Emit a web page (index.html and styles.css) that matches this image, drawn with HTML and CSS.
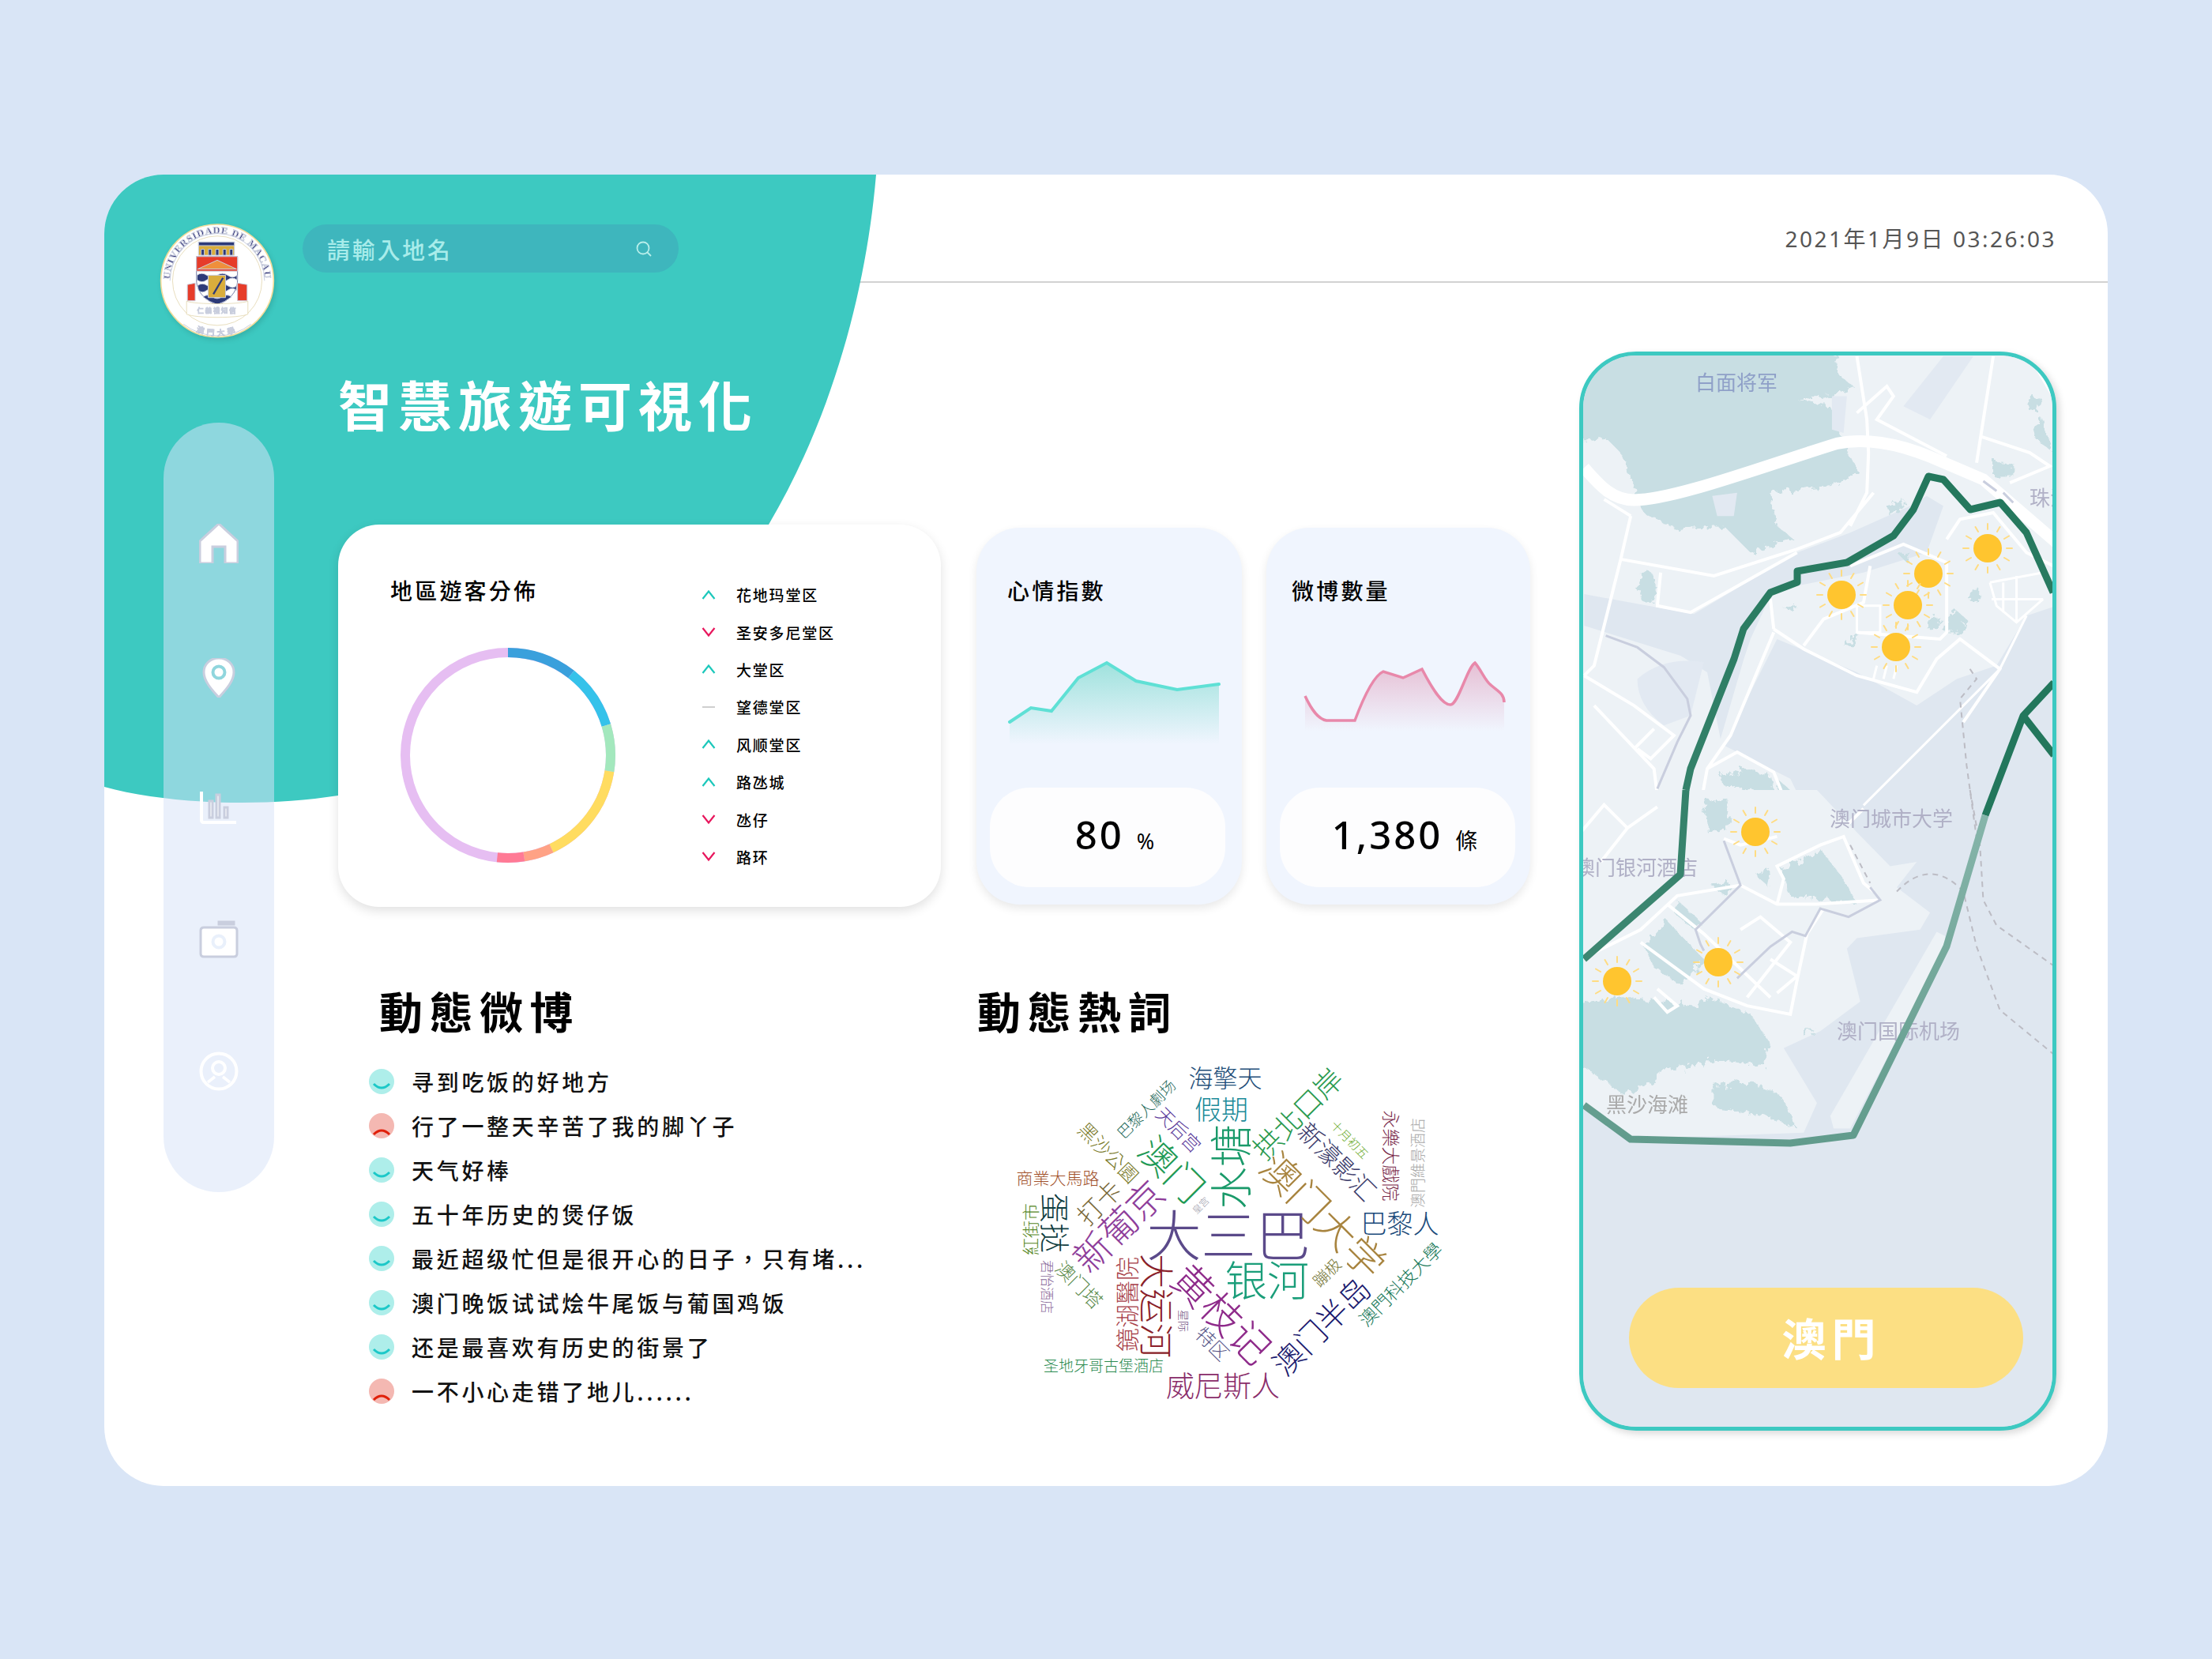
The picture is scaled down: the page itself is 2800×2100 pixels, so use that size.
FILE: index.html
```html
<!DOCTYPE html>
<html lang="zh-Hant">
<head>
    <meta charset="UTF-8">
    <meta name="viewport" content="width=device-width, initial-scale=1.0">
    <title>智慧旅遊可視化</title>
    <link rel="stylesheet" href="styles.css">
</head>
<body>
<svg class="defs" width="0" height="0">
    <filter id="rough" x="-20%" y="-20%" width="140%" height="140%">
        <feTurbulence type="fractalNoise" baseFrequency="0.05" numOctaves="3" seed="4"/>
        <feDisplacementMap in="SourceGraphic" scale="34"/>
    </filter>
    <symbol id="up" viewBox="0 0 18 14"><polyline points="1.5,12 9,2.5 16.5,12" fill="none" stroke="#1cc8bb" stroke-width="2.2"/></symbol>
    <symbol id="down" viewBox="0 0 18 14"><polyline points="1.5,2 9,11.5 16.5,2" fill="none" stroke="#e8175d" stroke-width="2.2"/></symbol>
    <symbol id="flat" viewBox="0 0 18 14"><line x1="1" y1="7" x2="17" y2="7" stroke="#cfcfcf" stroke-width="2"/></symbol>
    <symbol id="smile" viewBox="0 0 32 32"><circle cx="16" cy="16" r="16" fill="#aeeeea"/><path d="M6 19 Q16 29 26 19" fill="none" stroke="#1cc8c8" stroke-width="3"/></symbol>
    <symbol id="sad" viewBox="0 0 32 32"><circle cx="16" cy="16" r="16" fill="#f4b8b2"/><path d="M6 27 Q16 17 26 27" fill="none" stroke="#e0200a" stroke-width="3"/></symbol>
    <symbol id="sun" viewBox="-34 -34 68 68" overflow="visible">
        <path d="M0-24V-31M12-21L15.500-27M21-12L27-15.500M24 0H31M21 12L27 15.500M12 21L15.500 27M0 24V31M-12 21L-15.500 27M-21 12L-27 15.500M-24 0H-31M-21-12L-27-15.500M-12-21L-15.500-27" stroke="#ffdc82" stroke-width="2" stroke-linecap="round" fill="none"/>
        <circle r="18" fill="#ffc52f"/>
    </symbol>
</svg>

<div class="page">
<div class="panel">
    <div class="rule"></div>
    <svg class="teal" viewBox="0 0 1100 830" width="1100" height="830">
        <path d="M0 0H977C965 140 925 300 841 443L600 780L296 786C200 801 80 797 0 775Z" fill="#3dc9c1"/>
    </svg>

    <aside class="rail">
        <svg class="logo" viewBox="18 23 444 444" width="146" height="146">
            <circle cx="240" cy="243" r="217" fill="#fff" stroke="#f2dc9a" stroke-width="5"/>
            <circle cx="240" cy="243" r="172" fill="none" stroke="#dccd9c" stroke-width="2"/>
            <path id="seal-top" d="M58 243A182 182 0 0 1 422 243" fill="none"/>
            <path id="seal-bottom" d="M110 410A211 211 0 0 0 370 410" fill="none"/>
            <text class="seal-name"><textPath href="#seal-top" startOffset="50%">UNIVERSIDADE DE MACAU</textPath></text>
            <text class="seal-cn"><textPath href="#seal-bottom" startOffset="50%">澳門大學</textPath></text>
            <path d="M168 94H306V145H168Z" fill="#d9ad3c"/>
            <path d="M168 94H306V108H168ZM178 122H190V145H178ZM206 122H218V145H206ZM234 122H246V145H234ZM262 122H274V145H262ZM288 122H300V145H288Z" fill="#2d3a78"/>
            <path d="M160 150H318V240C318 290 280 322 240 336C200 322 160 290 160 240Z" fill="#fff" stroke="#2d3a78" stroke-width="2"/>
            <path d="M160 150H318V206H160Z" fill="#e63c2a"/>
            <path d="M165 198L240 164L314 198Z" fill="#ef8f3c"/>
            <path d="M162 222Q180 208 200 222T240 222T280 222T316 222V240Q298 226 280 240T240 240T200 240T162 240ZM164 262Q182 248 202 262T240 262T280 262T314 262V280Q298 266 280 280T240 280T200 280T168 280ZM185 305Q205 292 222 305T258 305T295 305Q270 325 240 335Q210 325 185 305Z" fill="#2d3a78"/>
            <path d="M205 222H272V308H205Z" fill="#d9ad3c"/>
            <path d="M225 295L262 232" stroke="#2d3a78" stroke-width="7"/>
            <path d="M125 258L155 252V320H125Z" fill="#e63c2a"/>
            <path d="M318 252L355 258V320H318Z" fill="#e63c2a"/>
            <path d="M122 322C160 335 320 335 358 322V372C320 388 160 388 122 372Z" fill="#fff" stroke="#dccd9c" stroke-width="2"/>
            <text class="seal-motto" x="240" y="366">仁義禮知信</text>
        </svg>
        <nav class="pill">
            <svg class="nav-icon" viewBox="0 0 50 50">
                <path d="M25 0L49 22V48Q49 50 47 50H33V29H17V50H3Q1 50 1 48V22Z" fill="#fff"/>
            </svg>
            <svg class="nav-icon nav-pin" viewBox="0 0 50 50">
                <path d="M25 0C14 0 6 8 6 18C6 30 18 42 25 50C32 42 44 30 44 18C44 8 36 0 25 0Z" fill="#fff"/>
                <circle cx="25" cy="18" r="7.500" fill="#fff" stroke="#90d6dd" stroke-width="4"/>
            </svg>
            <svg class="nav-icon" viewBox="0 0 50 50">
                <path d="M3 5V41Q3 44 6 44H47" fill="none" stroke="#fff" stroke-width="4"/>
                <path d="M13 17H17V38H13ZM22 9H26V38H22ZM32 25H36V38H32Z" fill="#fff"/>
            </svg>
            <svg class="nav-icon" viewBox="0 0 50 50">
                <path d="M25 3H44V6H25ZM6 10H44Q48 10 48 14V43Q48 47 44 47H6Q2 47 2 43V14Q2 10 6 10Z" fill="#fff"/>
                <circle cx="25" cy="28" r="7.500" fill="#fff" stroke="#e9f0fb" stroke-width="4"/>
            </svg>
            <svg class="nav-icon" viewBox="0 0 50 50">
                <circle cx="25" cy="25" r="22.500" fill="none" stroke="#fff" stroke-width="4"/>
                <circle cx="25" cy="21" r="8" fill="none" stroke="#fff" stroke-width="4"/>
                <path d="M11 39L20 32M39 39L30 32" stroke="#fff" stroke-width="3.500"/>
            </svg>
        </nav>
    </aside>

    <main class="main">
        <div class="search">
            <span class="search-text">請輸入地名</span>
            <svg class="search-icon" viewBox="0 0 24 24" width="24" height="24">
                <circle cx="11" cy="11" r="7.500" fill="none" stroke="#b8eeea" stroke-width="1.800"/>
                <path d="M16.500 16.500L21 21" stroke="#b8eeea" stroke-width="1.800"/>
            </svg>
        </div>
        <h1 class="title">智慧旅遊可視化</h1>

        <section class="cards">
            <div class="region-card">
                <div class="region-left">
                    <h3 class="card-title">地區遊客分佈</h3>
                    <svg class="donut" viewBox="0 0 280 280" width="280" height="280">
                        <g transform="rotate(-90 140 140)" fill="none" stroke-width="12">
                            <circle cx="140" cy="140" r="130" pathLength="360" stroke="#e6bef2"/>
                            <circle cx="140" cy="140" r="130" pathLength="360" stroke="#3aa0dc" stroke-dasharray="38 360"/>
                            <circle cx="140" cy="140" r="130" pathLength="360" stroke="#35c2ea" stroke-dasharray="35 360" stroke-dashoffset="-38"/>
                            <circle cx="140" cy="140" r="130" pathLength="360" stroke="#a3e8bd" stroke-dasharray="26 360" stroke-dashoffset="-73"/>
                            <circle cx="140" cy="140" r="130" pathLength="360" stroke="#ffdc60" stroke-dasharray="56 360" stroke-dashoffset="-99"/>
                            <circle cx="140" cy="140" r="130" pathLength="360" stroke="#ffa285" stroke-dasharray="16 360" stroke-dashoffset="-155"/>
                            <circle cx="140" cy="140" r="130" pathLength="360" stroke="#ff7a95" stroke-dasharray="15 360" stroke-dashoffset="-171"/>
                        </g>
                    </svg>
                </div>
                <ul class="legend">
                    <li><svg class="arrow"><use href="#up"/></svg>花地玛堂区</li>
                    <li><svg class="arrow"><use href="#down"/></svg>圣安多尼堂区</li>
                    <li><svg class="arrow"><use href="#up"/></svg>大堂区</li>
                    <li><svg class="arrow"><use href="#flat"/></svg>望德堂区</li>
                    <li><svg class="arrow"><use href="#up"/></svg>风顺堂区</li>
                    <li><svg class="arrow"><use href="#up"/></svg>路氹城</li>
                    <li><svg class="arrow"><use href="#down"/></svg>氹仔</li>
                    <li><svg class="arrow"><use href="#down"/></svg>路环</li>
                </ul>
            </div>

            <div class="mini-card">
                <h3 class="card-title mini-title">心情指數</h3>
                <svg class="spark" viewBox="1236 765 336 195" width="336" height="195">
                    <defs>
                        <linearGradient id="fill-teal" gradientUnits="userSpaceOnUse" x1="0" y1="839" x2="0" y2="942">
                            <stop offset="0" stop-color="#9fe2dd"/>
                            <stop offset="1" stop-color="#f0f5fe"/>
                        </linearGradient>
                        <linearGradient id="fill-pink" gradientUnits="userSpaceOnUse" x1="0" y1="839" x2="0" y2="925">
                            <stop offset="0" stop-color="#e6bfd4"/>
                            <stop offset="1" stop-color="#f0f5fe"/>
                        </linearGradient>
                    </defs>
                    <path d="M1278 914L1305 896L1331 900L1365 858L1401 839L1438 862L1490 873L1543 866V942H1278Z" fill="url(#fill-teal)"/>
                    <polyline points="1278,914 1305,896 1331,900 1365,858 1401,839 1438,862 1490,873 1543,866" fill="none" stroke="#5fe0d5" stroke-width="4" stroke-linecap="round"/>
                </svg>
                <div class="value"><b>80</b><span>%</span></div>
            </div>

            <div class="mini-card mini-card-b">
                <h3 class="card-title mini-title-b">微博數量</h3>
                <svg class="spark" viewBox="1603 765 334 195" width="334" height="195">
                    <path d="M1652 881C1660 898 1668 910 1679 912L1715 912C1727 880 1740 855 1751 850L1776 858L1800 847C1812 870 1825 892 1836 892C1846 892 1857 845 1867 839C1875 848 1880 862 1887 867C1896 875 1904 878 1904 889V925H1652Z" fill="url(#fill-pink)"/>
                    <path d="M1652 881C1660 898 1668 910 1679 912L1715 912C1727 880 1740 855 1751 850L1776 858L1800 847C1812 870 1825 892 1836 892C1846 892 1857 845 1867 839C1875 848 1880 862 1887 867C1896 875 1904 878 1904 889" fill="none" stroke="#e888aa" stroke-width="3.500"/>
                </svg>
                <div class="value"><b>1,380</b><span class="unit-cn">條</span></div>
            </div>
        </section>

        <section class="bottom">
            <div class="feed">
                <h2 class="heading heading-feed">動態微博</h2>
                <ul class="feed-list">
                    <li><svg class="mood"><use href="#smile"/></svg>寻到吃饭的好地方</li>
                    <li><svg class="mood"><use href="#sad"/></svg>行了一整天辛苦了我的脚丫子</li>
                    <li><svg class="mood"><use href="#smile"/></svg>天气好棒</li>
                    <li><svg class="mood"><use href="#smile"/></svg>五十年历史的煲仔饭</li>
                    <li><svg class="mood"><use href="#smile"/></svg>最近超级忙但是很开心的日子，只有堵...</li>
                    <li><svg class="mood"><use href="#smile"/></svg>澳门晚饭试试烩牛尾饭与葡国鸡饭</li>
                    <li><svg class="mood"><use href="#smile"/></svg>还是最喜欢有历史的街景了</li>
                    <li><svg class="mood"><use href="#sad"/></svg>一不小心走错了地儿......</li>
                </ul>
            </div>
            <div class="hot">
                <h2 class="heading">動態熱詞</h2>
                <svg class="cloud" viewBox="1237 1330 640 470" width="640" height="470">
                    <text x="1555" y="1565" font-size="69" fill="#5b4a8a">大三巴</text>
                    <text x="1551" y="1367" font-size="31" fill="#1f4e79">海擎天</text>
                    <text x="1546" y="1407" font-size="34" fill="#1c8a99">假期</text>
                    <text x="1555" y="1482" font-size="54" fill="#1a9a6a" transform="rotate(-90 1555 1482)">水塘</text>
                    <text x="1485" y="1483" font-size="47" fill="#1f9a55" transform="rotate(45 1485 1483)">澳门</text>
                    <text x="1677" y="1541" font-size="50" fill="#a8843f" transform="rotate(45 1677 1541)">澳门大学</text>
                    <text x="1641" y="1413" font-size="36" fill="#2a9a4f" transform="rotate(-45 1641 1413)">拱北口岸</text>
                    <text x="1414" y="1555" font-size="47" fill="#8e3d9a" transform="rotate(-45 1414 1555)">新葡京</text>
                    <text x="1549" y="1666" font-size="51" fill="#8e2a8a" transform="rotate(45 1549 1666)">黄枝记</text>
                    <text x="1604" y="1623" font-size="53" fill="#1b9e7a">银河</text>
                    <text x="1466" y="1658" font-size="44" fill="#8a1f2a" transform="rotate(90 1466 1658)">大运河</text>
                    <text x="1671" y="1682" font-size="39" fill="#1a1a6e" transform="rotate(-45 1671 1682)">澳门半岛</text>
                    <text x="1548" y="1757" font-size="36" fill="#8a2d6a">威尼斯人</text>
                    <text x="1397" y="1732" font-size="19" fill="#2a8a4f">圣地牙哥古堡酒店</text>
                    <text x="1772" y="1630" font-size="23" fill="#1a7a5a" transform="rotate(-45 1772 1630)">澳門科技大學</text>
                    <text x="1772" y="1552" font-size="33" fill="#1a4a7a">巴黎人</text>
                    <text x="1337" y="1553" font-size="38" fill="#0f3d3f" transform="rotate(90 1337 1553)">蛋挞</text>
                    <text x="1390" y="1526" font-size="32" fill="#7a6a3a" transform="rotate(-45 1390 1526)">打卡</text>
                    <text x="1339" y="1495" font-size="21" fill="#a0502a">商業大馬路</text>
                    <text x="1303" y="1561" font-size="22" fill="#5a8a2a" transform="rotate(-90 1303 1561)">紅街市</text>
                    <text x="1326" y="1634" font-size="17" fill="#8a6a9a" transform="rotate(90 1326 1634)">君怡酒店</text>
                    <text x="1367" y="1630" font-size="24" fill="#5a8a4a" transform="rotate(45 1367 1630)">澳门塔</text>
                    <text x="1425" y="1656" font-size="30" fill="#a83f4a" transform="rotate(-90 1425 1656)">鏡湖醫院</text>
                    <text x="1519" y="1530" font-size="12" fill="#9a9aa8" transform="rotate(-45 1519 1530)">皇宫</text>
                    <text x="1499" y="1677" font-size="14" fill="#6a4a7a" transform="rotate(90 1499 1677)">星际</text>
                    <text x="1536" y="1705" font-size="24" fill="#5a5a8a" transform="rotate(45 1536 1705)">特区</text>
                    <text x="1679" y="1615" font-size="20" fill="#7a7a3a" transform="rotate(-45 1679 1615)">蹦极</text>
                    <text x="1694" y="1474" font-size="31" fill="#3a3a6a" transform="rotate(45 1694 1474)">新濠影汇</text>
                    <text x="1709" y="1447" font-size="15" fill="#6aaa2a" transform="rotate(45 1709 1447)">十月初五</text>
                    <text x="1762" y="1468" font-size="23" fill="#7a2a4a" transform="rotate(90 1762 1468)">永樂大戲院</text>
                    <text x="1793" y="1477" font-size="19" fill="#a9a9a9" transform="rotate(-90 1793 1477)">澳門維景酒店</text>
                    <text x="1450" y="1408" font-size="19" fill="#1f6a5a" transform="rotate(-45 1450 1408)">巴黎人劇场</text>
                    <text x="1493" y="1434" font-size="23" fill="#5a3a9a" transform="rotate(45 1493 1434)">天后宫</text>
                    <text x="1404" y="1463" font-size="24" fill="#7a7a2a" transform="rotate(45 1404 1463)">黑沙公園</text>
                </svg>
            </div>
        </section>
    </main>

    <aside class="side">
        <div class="clock">2021年1月9日 03:26:03</div>
        <div class="map-card">
            <svg class="map" viewBox="2004 450 594 1356" width="594" height="1356">
                <defs>
                    <linearGradient id="route-dark" gradientUnits="userSpaceOnUse" x1="0" y1="600" x2="0" y2="1250">
                        <stop offset="0" stop-color="#23775c"/>
                        <stop offset="1" stop-color="#3f8873"/>
                    </linearGradient>
                    <linearGradient id="route-light" gradientUnits="userSpaceOnUse" x1="0" y1="1032" x2="0" y2="1450">
                        <stop offset="0" stop-color="#86b5aa"/>
                        <stop offset="1" stop-color="#619b8c"/>
                    </linearGradient>
                </defs>
                <rect class="water" x="2004" y="450" width="594" height="1356"/>

                <!-- upper part, north of the bridge down to the university -->
                <g transform="translate(1980 430) scale(.421)">
                    <path class="land" d="M50 40H1480V800L1390 830L1300 980L1180 1020L1060 1100L880 1000L640 900L480 1220L680 1320L800 1568H50Z"/>
                    <path class="water" d="M60 765L390 825L700 640L860 580L1040 500L1090 470L1140 500L1090 640L900 700L700 740L620 770L560 900L540 960L470 1200L430 1000L350 950L60 860Z"/>
                    <path class="water-soft" d="M1020 200L1140 50H1230L1100 240Z"/>
                    <path class="water-soft" d="M220 1020Q300 950 420 970L380 1130L300 1160Q220 1100 220 1020Z"/>
                    <path class="veg" d="M30 30H810L830 110L870 140L800 170L700 180L800 200L850 330L885 400L800 440L620 460L640 560L690 600L560 640L480 560L340 570L240 520L170 340L130 300L30 300Z"/>
                    <path class="water-soft" d="M805 170L850 170L840 280L805 270ZM445 470L520 460L510 530L460 530Z"/>
                    <ellipse class="veg" cx="250" cy="745" rx="25" ry="50"/>
                    <path class="veg" d="M970 500L1020 480L1020 510L980 530ZM1290 365L1350 370L1350 410L1290 410ZM1395 180L1430 170L1420 215L1395 210ZM1410 260L1440 240L1470 340L1420 300ZM1225 750L1250 750L1250 790L1220 785ZM1140 845L1180 815L1210 840L1200 880H1145ZM1090 845L1130 835L1125 870L1090 870ZM1010 650L1040 640L1030 670ZM660 810L700 800L690 815ZM840 920L880 880L870 925Z"/>
                    <path class="veg" d="M465 1310L540 1290L620 1310L630 1370L560 1350L480 1340ZM640 1320L710 1380L690 1400L640 1350ZM420 1370L530 1460L470 1460L415 1410Z"/>

                    <path class="road road-main" d="M60 385C100 430 140 482 210 482C330 482 600 380 820 312C900 295 1000 310 1100 352L1260 420L1480 610"/>
                    <path class="road" d="M170 660L450 710L700 630L830 580L930 460M200 530L170 660L90 980L60 1010M120 480L200 530M880 50L910 240L915 340L910 460L860 560M880 220L970 140L990 170L940 240L1150 350M1290 50L1240 370M1250 290L1400 340L1460 380L1340 430M1400 50L1470 170M290 700L280 800L380 820L700 640"/>
                    <path class="road" d="M60 1010L210 1100L330 1190L260 1260L220 1230M90 1100L270 1290L280 1370L200 1470M60 1470L120 1400L200 1470L280 1540M270 1170L210 1230"/>
                    <path class="road" d="M630 870L720 930L880 1010L1060 1060L1120 960L1190 900L1310 990L1200 1150M630 870L620 780M720 920L780 840L900 790L920 680M630 880L500 1190L430 1290L410 1400M860 680L1020 615L1150 670L1150 880L1130 900L880 880M1150 600L1190 540L1290 520L1390 640L1470 680"/>
                    <path class="road road-thin" d="M1280 730L1440 700M1280 730L1300 800L1360 850L1440 780M1320 730V820M1360 710V850M1285 780H1440M1390 830L1310 990L900 1400M940 980L930 1020M970 980L960 1020M1000 980L990 1020M880 800H950V880H880Z"/>
                    <path class="road" d="M430 1290L520 1240L630 1300L670 1400L670 1500M900 1410L830 1480L860 1560"/>
                    <path class="rail" d="M125 890L220 925L300 985L370 1080L380 1130L340 1210L280 1350M1260 425L1300 455M1320 460L1350 490"/>
                    <path class="ferry" d="M1220 990L1240 1020L1190 1080L1210 1280L1240 1500"/>
                </g>

                <!-- lower part, Taipa, Cotai and Coloane -->
                <g transform="translate(1980 1000) scale(.421 .5356)">
                    <path class="land" d="M50 0L760 0L880 100L980 180L1060 170L1000 230L1100 290L1070 330L880 350L850 375L890 500L770 570L660 610L760 740L720 810L210 825L50 740Z"/>
                    <path class="land" d="M1120 335L1145 345V370L860 800H810L800 770Z"/>
                    <path class="veg" d="M420 30L490 20L500 90L430 100ZM650 190L770 140L840 210L880 270L780 260L680 250ZM240 370L310 310L420 400L350 460L270 420ZM340 260L410 310L390 330L330 290ZM440 225L500 220L490 250ZM575 200L620 190L610 225ZM720 570L760 565L720 580Z"/>
                    <path class="veg" d="M30 510L150 490L300 500L400 510L440 490L560 530L620 600L600 650L480 640L300 660L240 700L180 720L30 640Z"/>
                    <path class="veg" d="M450 700L560 690L650 720L700 800L600 770L450 750Z"/>
                    <path class="road" d="M50 400L230 330L340 250L530 225L640 270L760 270L950 260M230 360L420 470L550 510L680 530L700 450L730 340L780 280M310 270L420 340L620 490M530 330L590 300L680 360L550 490M620 400L700 440L640 480M50 100L120 35L190 90L110 170M190 90L280 40M640 270L660 210L640 180L770 130L840 110L900 220L930 240M280 470L340 510L310 525L270 490M480 115L530 130L640 110"/>
                    <path class="rail" d="M480 120L530 225L395 330L410 365L420 380M520 445L620 370L685 335L725 345L770 280L855 300L950 260L920 230"/>
                    <path class="ferry" d="M1220 0L1250 130L1260 260L1300 320L1480 420M1000 240C1060 190 1130 180 1200 240L1240 370L1310 520L1480 630M860 130L920 220"/>
                </g>

                <text class="map-label label-blue" x="2146" y="494">白面将军</text>
                <text class="map-label" x="2569" y="640">珠海</text>
                <text class="map-label" x="2316" y="1046">澳门城市大学</text>
                <text class="map-label" x="1993" y="1108">澳门银河酒店</text>
                <text class="map-label" x="2325" y="1315">澳门国际机场</text>
                <text class="map-label label-grey" x="2033" y="1408">黑沙海滩</text>

                <path class="route route-dark" d="M2134 1000L2140 973L2195 834L2207 796L2241 750L2275 737L2275 723L2338 712L2397 678L2422 645L2441 603L2460 607L2494 645L2532 636L2565 674L2599 750"/>
                <path class="route route-dark" d="M2134 1000L2127 1107L2005 1214"/>
                <path class="route route-solid" d="M2513 1032L2561 906L2600 864M2561 906L2600 956"/>
                <path class="route route-light" d="M2513 1032L2464 1198L2346 1437L2266 1447L2064 1442L2005 1399"/>

                <use href="#sun" x="2297" y="719" width="68" height="68"/>
                <use href="#sun" x="2407" y="692" width="68" height="68"/>
                <use href="#sun" x="2381" y="732" width="68" height="68"/>
                <use href="#sun" x="2366" y="785" width="68" height="68"/>
                <use href="#sun" x="2482" y="660" width="68" height="68"/>
                <use href="#sun" x="2188" y="1019" width="68" height="68"/>
                <use href="#sun" x="2141" y="1184" width="68" height="68"/>
                <use href="#sun" x="2013" y="1208" width="68" height="68"/>
            </svg>
            <button class="city-btn">澳門</button>
        </div>
    </aside>
</div>
</div>
</body>
</html>
```

FILE: styles.css
```css
* {
    box-sizing: border-box;
}

body {
    margin: 0;
    background-color: #d9e5f6;
    font-family: "Noto Sans CJK TC", "Noto Sans", sans-serif;
    color: #111;
}

.defs {
    position: absolute;
}

h1, h2, h3, ul {
    margin: 0;
    padding: 0;
    list-style: none;
}

.page {
    padding: 221px 132px 0 132px;
    height: 2100px;
}

.panel {
    position: relative;
    display: flex;
    height: 1660px;
    background-color: #fff;
    border-radius: 75px;
    overflow: hidden;
}

.rule {
    position: absolute;
    top: 135px;
    left: 900px;
    right: 0;
    height: 2px;
    background-color: #d2d2d2;
}

.teal {
    position: absolute;
    top: 0;
    left: 0;
}

/* left rail */
.rail {
    position: relative;
    width: 251px;
    flex: none;
    padding: 62px 0 0 70px;
}

.logo {
    display: block;
    filter: drop-shadow(2px 3px 3px rgba(0, 0, 0, 0.12));
}

.seal-name {
    font-family: "Liberation Serif", serif;
    font-weight: bold;
    font-size: 37px;
    letter-spacing: 3px;
    fill: #1f1f6a;
    text-anchor: middle;
}

.seal-cn {
    font-size: 30px;
    letter-spacing: 12px;
    fill: #2a2a70;
    text-anchor: middle;
}

.seal-motto {
    font-size: 25px;
    letter-spacing: 6px;
    fill: #444;
    text-anchor: middle;
}

.pill {
    display: flex;
    flex-direction: column;
    align-items: center;
    gap: 117px;
    width: 140px;
    height: 974px;
    margin: 106px 0 0 5px;
    padding-top: 128px;
    border-radius: 70px;
    background-color: rgba(215, 226, 247, 0.53);
}

.nav-icon {
    width: 50px;
    height: 50px;
    flex: none;
}

.nav-pin {
    transform: translateY(3px);
}

/* middle column */
.main {
    position: relative;
    width: 1616px;
    flex: none;
}

.search {
    display: flex;
    align-items: center;
    justify-content: space-between;
    width: 476px;
    height: 61px;
    margin-top: 63px;
    padding: 0 32px 0 31px;
    border-radius: 31px;
    background-color: #3eb6bd;
}

.search-text {
    font-size: 29px;
    font-weight: 500;
    letter-spacing: 2.700px;
    color: #a8ecea;
}

.title {
    margin: 126px 0 0 45px;
    font-size: 68px;
    line-height: 80px;
    font-weight: 700;
    letter-spacing: 8px;
    color: #fff;
}

.cards {
    display: flex;
    align-items: flex-start;
    margin: 113px 0 0 45px;
}

.region-card {
    display: flex;
    width: 763px;
    height: 484px;
    margin-right: 45px;
    padding: 65px 0 0 66px;
    border-radius: 52px;
    background-color: #fff;
    box-shadow: 0 5px 14px rgba(0, 0, 0, 0.12);
}

.region-left {
    width: 394px;
}

.card-title {
    font-size: 28px;
    line-height: 36px;
    font-weight: 500;
    letter-spacing: 3.200px;
    color: #000;
}

.donut {
    display: block;
    margin: 51px 0 0 9px;
}

.legend li {
    display: flex;
    align-items: center;
    height: 47.400px;
    font-size: 19px;
    font-weight: 500;
    letter-spacing: 1.800px;
    color: #000;
}

.arrow {
    width: 18px;
    height: 14px;
    margin-right: 26px;
}

.mini-card {
    width: 336px;
    height: 477px;
    margin-top: 4px;
    margin-right: 31px;
    padding-top: 61px;
    border-radius: 55px;
    background-color: #f0f5fe;
    box-shadow: 0 5px 12px rgba(0, 0, 0, 0.09);
}

.mini-card-b {
    width: 334px;
    margin-right: 0;
}

.mini-title {
    padding-left: 39px;
}

.mini-title-b {
    padding-left: 32px;
}

.spark {
    display: block;
}

.value {
    display: flex;
    align-items: baseline;
    justify-content: center;
    gap: 16px;
    width: 298px;
    height: 126px;
    margin: 37px 0 0 17px;
    padding: 26px 0 0 18px;
    border-radius: 50px;
    background-color: #fdfdfe;
    font-family: "Noto Sans", sans-serif;
    color: #000;
}

.value b {
    font-size: 49px;
    font-weight: 500;
    letter-spacing: 3px;
}

.value span {
    font-size: 27px;
}

.value .unit-cn {
    font-family: "Noto Sans CJK TC", sans-serif;
    font-size: 28px;
}

.bottom {
    display: flex;
    margin-top: 95px;
}

.heading {
    font-size: 55px;
    line-height: 70px;
    font-weight: 700;
    letter-spacing: 8.500px;
    color: #000;
}

.feed {
    width: 770px;
    margin-left: 84px;
}

.heading-feed {
    margin-left: 13px;
}

.feed-list {
    margin-top: 28px;
    font-family: "Noto Sans CJK SC", sans-serif;
    font-weight: 500;
}

.feed-list li {
    display: flex;
    align-items: center;
    height: 56px;
    font-size: 28px;
    letter-spacing: 3.700px;
    white-space: nowrap;
}

.mood {
    width: 32px;
    height: 32px;
    margin-right: 22px;
    flex: none;
}

.cloud {
    display: block;
    margin-top: 12px;
    font-family: "Noto Sans CJK SC", sans-serif;
    font-weight: 300;
}

.cloud text {
    text-anchor: middle;
    dominant-baseline: central;
}

/* map column */
.side {
    position: relative;
    flex: 1;
    padding-right: 67px;
}

.clock {
    margin-top: 63px;
    font-family: "Noto Sans", "Noto Sans CJK SC", sans-serif;
    font-size: 28px;
    line-height: 36px;
    letter-spacing: 2.500px;
    text-align: right;
    color: #555;
}

.map-card {
    position: relative;
    width: 604px;
    height: 1366px;
    margin-top: 125px;
    border: 5px solid #3dc9c1;
    border-radius: 72px;
    overflow: hidden;
    background-color: #dfe7f0;
    box-shadow: 4px 4px 10px rgba(0, 0, 0, 0.15);
}

.map {
    display: block;
    filter: blur(0.6px);
}

.water {
    fill: #dfe7f0;
}

.water-soft {
    fill: #e2e9f2;
}

.land {
    fill: #edf2f6;
}

.veg {
    fill: #c8dee3;
    filter: url(#rough);
}

.road {
    fill: none;
    stroke: #fff;
    stroke-width: 4px;
    vector-effect: non-scaling-stroke;
}

.road-main {
    stroke-width: 15px;
}

.road-thin {
    stroke-width: 3px;
}

.rail {
    fill: none;
    stroke: #c9cede;
    stroke-width: 3px;
    vector-effect: non-scaling-stroke;
}

.ferry {
    fill: none;
    stroke: #bcbcc4;
    stroke-width: 2px;
    stroke-dasharray: 7 6;
    vector-effect: non-scaling-stroke;
}

.map-label {
    font-family: "Noto Sans CJK SC", sans-serif;
    font-size: 26px;
    fill: #b0b0c6;
}

.label-blue {
    fill: #8fa0c8;
}

.label-grey {
    fill: #aaa;
}

.route {
    fill: none;
    stroke-width: 9px;
    stroke-linejoin: round;
}

.route-dark {
    stroke: url(#route-dark);
}

.route-solid {
    stroke: #23775c;
}

.route-light {
    stroke: url(#route-light);
}

.city-btn {
    position: absolute;
    left: 58px;
    bottom: 49px;
    width: 499px;
    height: 127px;
    padding: 0 0 4px 14px;
    border: none;
    border-radius: 64px;
    background-color: #fcdf83;
    font-family: "Noto Sans CJK TC", sans-serif;
    font-size: 56px;
    font-weight: 700;
    letter-spacing: 7px;
    color: #fff;
}
```
